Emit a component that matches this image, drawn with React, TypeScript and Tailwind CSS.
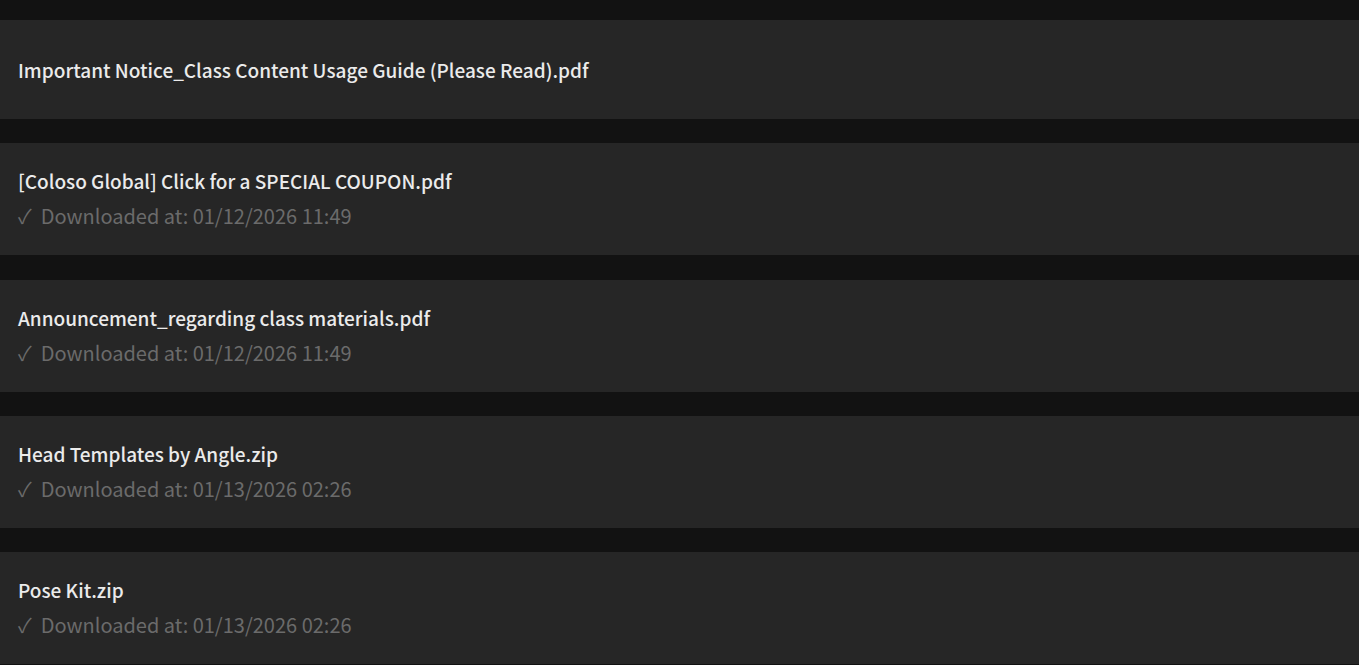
import React from "react";

const items = [
  { title: "[Coloso Global] Click for a SPECIAL COUPON.pdf", date: "01/12/2026 11:49" },
  { title: "Announcement_regarding class materials.pdf", date: "01/12/2026 11:49" },
  { title: "Head Templates by Angle.zip", date: "01/13/2026 02:26" },
  { title: "Pose Kit.zip", date: "01/13/2026 02:26" },
];

export default function App() {
  return (
    <div
      className="min-h-screen bg-[#121212] pt-5 flex flex-col gap-[24.33px]"
      style={{ fontFamily: '"Noto Sans CJK KR", "Noto Sans", sans-serif' }}
    >
      <div className="h-[99px] shrink-0 bg-[#262626] px-[18px] flex items-center">
        <span className="text-[19px] font-medium leading-7 text-[#ebebeb]">
          Important Notice_Class Content Usage Guide (Please Read).pdf
        </span>
      </div>
      {items.map((it) => (
        <div key={it.title} className="h-[112px] shrink-0 bg-[#262626] px-[18px] pt-6 flex flex-col">
          <div className="text-[19px] font-medium leading-7 text-[#ebebeb]">{it.title}</div>
          <div className="mt-[7px] text-[20px] leading-7 text-[#6b6b6b]">
            <span className="mr-[9px]">✓</span>Downloaded at: {it.date}
          </div>
        </div>
      ))}
    </div>
  );
}
